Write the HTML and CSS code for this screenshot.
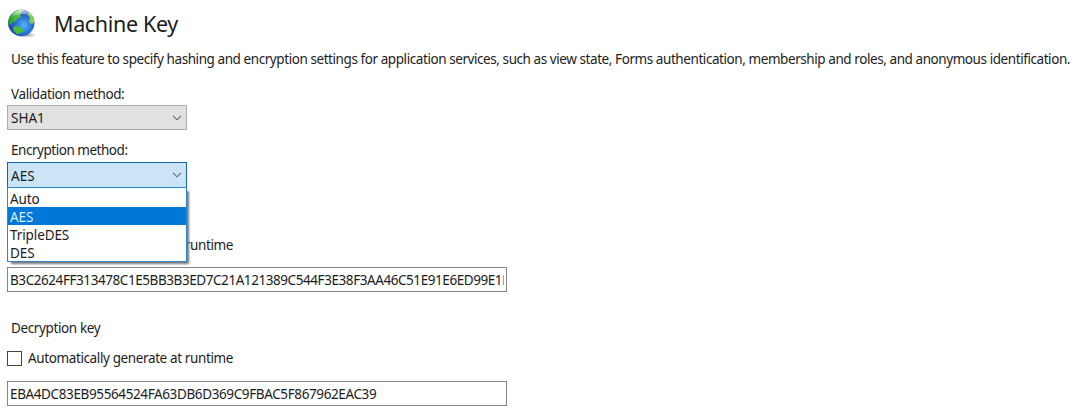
FILE: index.html
```html
<!DOCTYPE html>
<html lang="en">
<head>
<meta charset="utf-8">
<title>Machine Key</title>
<link rel="stylesheet" href="styles.css">
</head>
<body>
<main class="page">
  <header class="header">
    <svg class="globe" viewBox="0 0 30 30" aria-hidden="true">
      <defs>
        <radialGradient id="sea" cx="60%" cy="58%" r="60%">
          <stop offset="0" stop-color="#55b4f2"/>
          <stop offset=".5" stop-color="#2a74d6"/>
          <stop offset="1" stop-color="#1c3ea0"/>
        </radialGradient>
        <radialGradient id="shade"><stop offset="0" stop-color="#555" stop-opacity=".65"/><stop offset="1" stop-color="#777" stop-opacity="0"/></radialGradient>
        <linearGradient id="shine" x2="0" y2="1"><stop offset="0" stop-color="#fff" stop-opacity=".75"/><stop offset="1" stop-color="#fff" stop-opacity=".05"/></linearGradient>
        <linearGradient id="land" x2="1" y2="0"><stop offset="0" stop-color="#1f9a35"/><stop offset="1" stop-color="#6bcf3a"/></linearGradient>
        <clipPath id="ball"><circle cx="14.3" cy="15" r="13.2"/></clipPath>
      </defs>
      <ellipse cx="19" cy="27" rx="11" ry="2.8" fill="url(#shade)"/>
      <circle cx="14.3" cy="15" r="13.2" fill="url(#sea)"/>
      <g clip-path="url(#ball)">
        <path d="M1 14 2 7l5-5 6-1 2 3-2 2 1 3-3 1-2 3-3 1-2 3-2-1Z" fill="url(#land)"/>
        <path d="M6 19.5 9 18l4 1 4 4-3 2-4 1-3-3Z" fill="#45bd35"/>
        <path d="m22 4 5 5v6l-3 1-2-3 1-3-2-3Z" fill="#86cf4c"/>
        <path d="M4 9C7 0 21 0 25 8 18 5 10 6 4 9" fill="url(#shine)"/>
      </g>
    </svg>
    <h1 class="title">Machine Key</h1>
  </header>
  <p class="description">Use this feature to specify hashing and encryption settings for application services, such as view state, Forms authentication, membership and roles, and anonymous identification.</p>

  <section class="field validation">
    <div class="label">Validation method:</div>
    <div class="select"><span>SHA1</span><svg class="chevron" viewBox="0 0 10 6"><path d="m1 .8 4 4 4-4"/></svg></div>
  </section>

  <section class="field encryption">
    <div class="label">Encryption method:</div>
    <div class="select open"><span>AES</span><svg class="chevron" viewBox="0 0 10 6"><path d="m1 .8 4 4 4-4"/></svg>
      <ul class="menu">
        <li>Auto</li>
        <li class="selected">AES</li>
        <li>TripleDES</li>
        <li>DES</li>
      </ul>
    </div>
  </section>

  <section class="key validation-key">
    <div class="check"><i class="box"></i><span>Automatically generate at runtime</span></div>
    <div class="input"><span>B3C2624FF313478C1E5BB3B3ED7C21A121389C544F3E38F3AA46C51E91E6ED99E1E</span></div>
  </section>

  <section class="key decryption-key">
    <div class="label">Decryption key</div>
    <div class="check"><i class="box"></i><span>Automatically generate at runtime</span></div>
    <div class="input"><span>EBA4DC83EB95564524FA63DB6D369C9FBAC5F867962EAC39</span></div>
  </section>
</main>
</body>
</html>
```
FILE: styles.css
```css
* { box-sizing: border-box; }
body { margin: 0; background: #fff; color: #1c1c1c; font: 13.5px/18px "Noto Sans", "Open Sans", sans-serif; letter-spacing: -.38px; }
.page { height: 414px; padding: 7px 7px 0; overflow: hidden; white-space: nowrap; }
.header { display: flex; height: 34px; align-items: center; }
.globe { width: 30px; height: 30px; margin-bottom: 2px; }
.title { margin: 0 0 0 17px; font-size: 21.5px; line-height: 30px; font-weight: 400; letter-spacing: -.35px; }
.description { margin: 9px 0 0 4px; height: 18px; letter-spacing: -.427px; }
.label { height: 18px; padding-left: 4px; }
.encryption .label { letter-spacing: -.47px; }
.field { width: 180px; }
.validation { margin-top: 17px; }
.encryption { margin-top: 11px; }
.select { display: flex; position: relative; align-items: center; justify-content: space-between; height: 25px; margin-top: 2px; padding: 0 4px 0 3px; border: 1px solid #adadad; background: #e1e1e1; letter-spacing: 0; }
.open { height: 26px; margin-top: 3px; border-color: #1467af; background: #cce4f7; }
.open > span { padding-top: 2px; }
.chevron { width: 10px; height: 6px; fill: none; stroke: #666; stroke-width: 1.1; }
.menu { position: absolute; z-index: 1; top: 24px; left: -1px; width: 180px; height: 75px; margin: 0; padding: 1px 0 0; border: 1px solid #2c85cf; background: #fff; list-style: none; box-shadow: 3px 3px 2px -1px #777; letter-spacing: -.1px; }
.menu li { height: 18px; padding-left: 2px; line-height: 20px; }
.menu .selected { color: #d9edff; background: #0078d7; }
.validation-key { margin-top: 48px; }
.check { display: flex; align-items: center; height: 18px; line-height: 20px; }
.box { width: 15px; height: 15px; margin-right: 6px; border: 1px solid #444; }
.input { width: 500px; height: 25px; margin-top: 13px; padding: 3px 2px; border: 1px solid #858585; }
.input span { display: block; overflow: hidden; }
.validation-key .input { letter-spacing: -.43px; }
.decryption-key { margin-top: 27px; }
.decryption-key .check { margin-top: 12px; }
.decryption-key .input { margin-top: 14px; }
```
